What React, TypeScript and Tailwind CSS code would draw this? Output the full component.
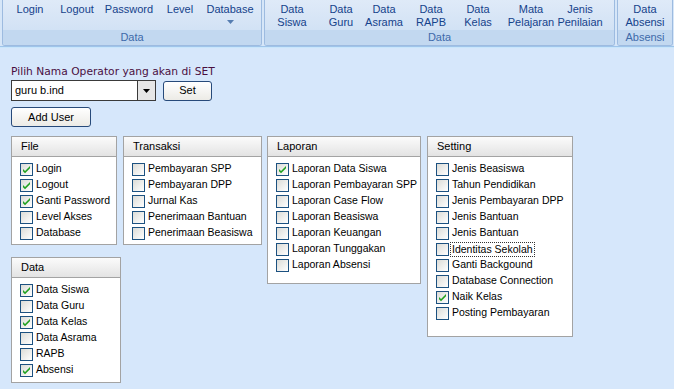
import React from "react";

const RIB = "font-['Liberation_Sans',Arial,sans-serif]";

function RibbonBtn({ w, l1, l2, arrow }: { w: number; l1: string; l2?: string; arrow?: boolean }) {
  return (
    <div className="flex justify-center shrink-0" style={{ width: w }}>
      <div className="flex flex-col items-center whitespace-nowrap text-[11px] leading-[13px] text-[#15428b]">
        <span>{l1}</span>
        {l2 ? <span>{l2}</span> : null}
        {arrow ? (
          <svg width="7" height="4" viewBox="0 0 7 4" className="mt-[4px]">
            <path d="M0 0h7L3.5 4z" fill="#567db1" />
          </svg>
        ) : null}
      </div>
    </div>
  );
}

function Group({ width, label, pl, children }: { width: number; label: string; pl: number; children: React.ReactNode }) {
  return (
    <div
      className="shrink-0 flex flex-col border-x border-b border-[#9dbbe0] rounded-b-[3px] overflow-hidden"
      style={{ width }}
    >
      <div className="h-[30px] bg-gradient-to-b from-[#dfeaf8] to-[#d2e2f5] flex pt-[3px]" style={{ paddingLeft: pl }}>
        {children}
      </div>
      <div className="h-[15px] bg-[#c2d8f0] flex items-center justify-center text-[11px] leading-[13px] text-[#3e6aaa]">
        {label}
      </div>
    </div>
  );
}

function Check({ checked }: { checked?: boolean }) {
  return (
    <div className="w-[13px] h-[13px] border border-[#1c5180] bg-gradient-to-br from-[#dcdcd7] to-[#ffffff] shrink-0 flex items-center justify-center">
      {checked ? (
        <svg width="9" height="9" viewBox="0 0 9 9">
          <path d="M1 4l2 2l5-5v2.2l-5 5l-2-2z" fill="#21a121" />
        </svg>
      ) : null}
    </div>
  );
}

type Item = { t: string; c?: boolean; focus?: boolean };

function Panel({ title, items, w, h, className }: { title: string; items: Item[]; w: number; h: number; className?: string }) {
  return (
    <div className={`bg-white border border-[#a3a3a3] shrink-0 flex flex-col ${className ?? ""}`} style={{ width: w, height: h }}>
      <div className="h-[20px] shrink-0 bg-gradient-to-b from-[#fbfbfb] to-[#e3e3e3] border-b border-[#a3a3a3] pl-[9px] flex items-center text-[11px] text-black">
        {title}
      </div>
      <div className="pt-[4px] pl-[8px] flex flex-col">
        {items.map((it, i) => (
          <div key={i} className="h-[16px] flex items-center gap-[2px] text-[10.5px] text-black whitespace-nowrap">
            <Check checked={it.c} />
            <span className={it.focus ? "outline outline-1 outline-dotted outline-[#333] px-[1px] leading-[13px]" : "px-[1px]"}>{it.t}</span>
          </div>
        ))}
      </div>
    </div>
  );
}

export default function App() {
  return (
    <div className={`w-[674px] h-[389px] bg-[#d6e7fb] overflow-hidden ${RIB}`}>
      {/* Ribbon */}
      <div className="h-[46px] bg-[#d6e6f8] flex pl-[2px] gap-[2px]">
        <Group width={260} label="Data" pl={3}>
          <RibbonBtn w={48} l1="Login" />
          <RibbonBtn w={46} l1="Logout" />
          <RibbonBtn w={58} l1="Password" />
          <RibbonBtn w={44} l1="Level" />
          <RibbonBtn w={56} l1="Database" arrow />
        </Group>
        <Group width={351} label="Data" pl={3}>
          <RibbonBtn w={48} l1="Data" l2="Siswa" />
          <RibbonBtn w={50} l1="Data" l2="Guru" />
          <RibbonBtn w={36} l1="Data" l2="Asrama" />
          <RibbonBtn w={58} l1="Data" l2="RAPB" />
          <RibbonBtn w={36} l1="Data" l2="Kelas" />
          <RibbonBtn w={70} l1="Mata" l2="Pelajaran" />
          <RibbonBtn w={28} l1="Jenis" l2="Penilaian" />
        </Group>
        <Group width={56} label="Absensi" pl={3}>
          <RibbonBtn w={48} l1="Data" l2="Absensi" />
        </Group>
      </div>
      <div className="h-[1px] bg-[#9fc4ea]" />
      <div className="h-[1px] bg-[#c9e6fb]" />

      {/* Operator selection */}
      <div className="pl-[11px] pt-[17px]">
        <div className="font-['DejaVu_Sans',Verdana,sans-serif] text-[10.7px] leading-[13px] text-[#4a0f3f]">
          Pilih Nama Operator yang akan di SET
        </div>
        <div className="flex items-center mt-[2px]">
          <div className="w-[145px] h-[21px] border border-[#3a3a3a] bg-white flex">
            <div className="flex-1 flex items-center pl-[3px] text-[11px] text-black">guru b.ind</div>
            <div className="w-[18px] border-l border-[#3a3a3a] bg-[#e6e6e6] flex items-center justify-center">
              <svg width="7" height="4" viewBox="0 0 7 4">
                <path d="M0 0h7L3.5 4z" fill="#000" />
              </svg>
            </div>
          </div>
          <button className="ml-[7px] w-[49px] h-[20px] border border-[#274a7a] rounded-[3px] bg-gradient-to-b from-[#ffffff] to-[#ecebe6] text-[11px] text-black flex items-center justify-center">
            Set
          </button>
        </div>
        <button className="mt-[6px] w-[80px] h-[20px] border border-[#274a7a] rounded-[3px] bg-gradient-to-b from-[#ffffff] to-[#ecebe6] text-[11px] text-black flex items-center justify-center">
          Add User
        </button>
      </div>

      {/* Panels */}
      <div className="flex items-start pl-[11px] mt-[9px]">
        <div className="flex flex-col gap-[12px] w-[110px] shrink-0">
          <Panel
            title="File"
            w={106}
            h={109}
            items={[
              { t: "Login", c: true },
              { t: "Logout", c: true },
              { t: "Ganti Password", c: true },
              { t: "Level Akses" },
              { t: "Database" },
            ]}
          />
          <Panel
            title="Data"
            w={110}
            h={126}
            items={[
              { t: "Data Siswa", c: true },
              { t: "Data Guru" },
              { t: "Data Kelas", c: true },
              { t: "Data Asrama" },
              { t: "RAPB" },
              { t: "Absensi", c: true },
            ]}
          />
        </div>
        <Panel
          className="ml-[2px]"
          title="Transaksi"
          w={139}
          h={109}
          items={[
            { t: "Pembayaran SPP" },
            { t: "Pembayaran DPP" },
            { t: "Jurnal Kas" },
            { t: "Penerimaan Bantuan" },
            { t: "Penerimaan Beasiswa" },
          ]}
        />
        <Panel
          className="ml-[5px]"
          title="Laporan"
          w={154}
          h={148}
          items={[
            { t: "Laporan Data Siswa", c: true },
            { t: "Laporan Pembayaran SPP" },
            { t: "Laporan Case Flow" },
            { t: "Laporan Beasiswa" },
            { t: "Laporan Keuangan" },
            { t: "Laporan Tunggakan" },
            { t: "Laporan Absensi" },
          ]}
        />
        <Panel
          className="ml-[6px]"
          title="Setting"
          w={146}
          h={201}
          items={[
            { t: "Jenis Beasiswa" },
            { t: "Tahun Pendidikan" },
            { t: "Jenis Pembayaran DPP" },
            { t: "Jenis Bantuan" },
            { t: "Jenis Bantuan" },
            { t: "Identitas Sekolah", focus: true },
            { t: "Ganti Backgound" },
            { t: "Database Connection" },
            { t: "Naik Kelas", c: true },
            { t: "Posting Pembayaran" },
          ]}
        />
      </div>
    </div>
  );
}
